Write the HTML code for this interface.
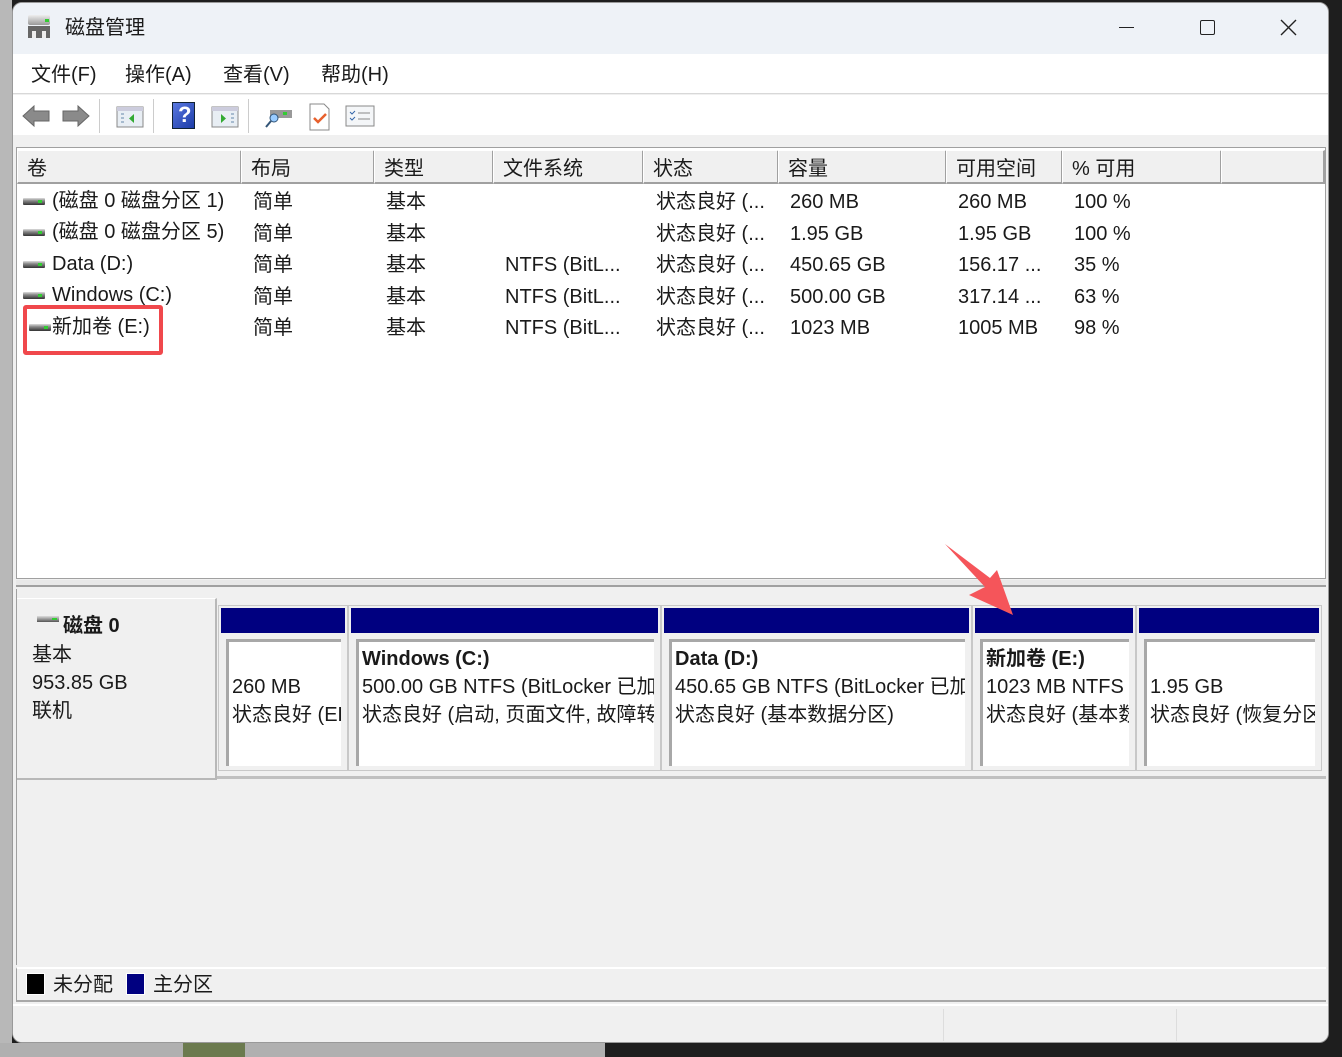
<!DOCTYPE html>
<html><head><meta charset="utf-8"><style>
*{margin:0;padding:0;box-sizing:border-box}
body{width:1342px;height:1057px;position:relative;overflow:hidden;background:#1e1e1e;font-family:"Liberation Sans","Noto Sans CJK SC",sans-serif;font-size:20px;color:#1a1a1a}
.a{position:absolute}
.t{position:absolute;white-space:nowrap;line-height:24px}
.hd{position:absolute;top:150px;height:34px;background:#f0f0f0;border-right:2px solid #a0a0a0;border-bottom:2px solid #a0a0a0;border-left:1px solid #fff;border-top:1px solid #fff;padding:1px 0 0 9px;white-space:nowrap}
.dr{position:absolute;width:22px;height:7px;background:linear-gradient(#ddd,#888 40%,#333);border-radius:1px}
.dr::after{content:"";position:absolute;right:3px;top:2px;width:4px;height:3px;background:#3c3}
.col{position:absolute;top:605px;height:166px;background:#f0f0f0;border:1px solid #c8c8c8}
.bar{position:absolute;left:2px;right:2px;top:2px;height:25px;background:#000080}
.box{position:absolute;left:7px;right:6px;top:33px;bottom:4px;background:#fff;border-left:3px solid #a8a8a8;border-top:3px solid #a8a8a8;padding:3px 0 0 3px;overflow:hidden;white-space:nowrap;line-height:28px}
.ic{position:absolute;top:103px}
</style></head><body>
<div class="a" style="left:0;top:0;width:12px;height:1057px;background:#b8b8b8"></div>
<div class="a" style="left:0;top:1043px;width:605px;height:14px;background:#b0b0b0"></div>
<div class="a" style="left:183px;top:1043px;width:62px;height:14px;background:#6b7a4e"></div>
<div class="a" style="left:12px;top:2px;width:1317px;height:1041px;background:#f0f0f0;border-radius:10px;overflow:hidden;border:1px solid #999"></div>
<div class="a" style="left:13px;top:3px;width:1315px;height:51px;background:#eef2f7;border-radius:9px 9px 0 0"></div>
<div class="a" style="left:28px;top:15px;width:22px;height:10px;background:linear-gradient(#eee,#999);border-radius:2px"></div>
<div class="a" style="left:45px;top:19px;width:4px;height:3px;background:#3c3"></div>
<div class="a" style="left:28px;top:26px;width:22px;height:12px;background:#666"></div>
<div class="a" style="left:32px;top:31px;width:4px;height:7px;background:#eee"></div>
<div class="a" style="left:42px;top:31px;width:4px;height:7px;background:#eee"></div>
<div class="t" style="left:65px;top:16px">磁盘管理</div>
<div class="a" style="left:1119px;top:27px;width:15px;height:1px;background:#222"></div>
<div class="a" style="left:1200px;top:20px;width:15px;height:15px;border:1.5px solid #222;border-radius:2px"></div>
<svg class="a" style="left:1280px;top:19px" width="17" height="17"><path d="M1 1L16 16M16 1L1 16" stroke="#222" stroke-width="1.4"/></svg>
<div class="a" style="left:13px;top:54px;width:1315px;height:40px;background:#fff;border-bottom:1px solid #d8d8d8"></div>
<div class="t" style="left:31px;top:63px">文件(F)</div>
<div class="t" style="left:125px;top:63px">操作(A)</div>
<div class="t" style="left:223px;top:63px">查看(V)</div>
<div class="t" style="left:321px;top:63px">帮助(H)</div>
<div class="a" style="left:13px;top:95px;width:1315px;height:40px;background:#fff"></div>
<svg class="a" style="left:21px;top:103px" width="70" height="26"><path d="M2 13L13 3V8H28V18H13V23Z" fill="#8a8a8a" stroke="#666"/><path d="M68 13L57 3V8H42V18H57V23Z" fill="#8a8a8a" stroke="#666"/></svg>
<div class="a" style="left:99px;top:99px;width:1px;height:34px;background:#ccc"></div>
<svg class="ic" style="left:116px" width="28" height="26"><rect x="1" y="4" width="26" height="20" fill="#e8eef4" stroke="#888"/><rect x="1" y="4" width="26" height="4" fill="#ccd"/><path d="M18 11v9l-5-4.5z" fill="#3a3"/><path d="M5 11h3M5 15h3M5 19h3" stroke="#68a"/></svg>
<div class="a" style="left:153px;top:99px;width:1px;height:34px;background:#ccc"></div>
<div class="a" style="left:172px;top:102px;width:23px;height:27px;background:linear-gradient(135deg,#5a78e0,#1c3ca8);border:1px solid #123"><span style="position:absolute;left:5px;top:-1px;color:#fff;font-size:22px;font-weight:bold">?</span></div>
<svg class="ic" style="left:211px" width="28" height="26"><rect x="1" y="4" width="26" height="20" fill="#e8eef4" stroke="#888"/><rect x="1" y="4" width="26" height="4" fill="#ccd"/><path d="M10 11v9l5-4.5z" fill="#3a3"/><path d="M20 11h3M20 15h3M20 19h3" stroke="#68a"/></svg>
<div class="a" style="left:248px;top:99px;width:1px;height:34px;background:#ccc"></div>
<svg class="ic" style="left:264px" width="30" height="26"><rect x="6" y="7" width="22" height="8" fill="#999"/><rect x="19" y="9" width="4" height="3" fill="#3c3"/><circle cx="10" cy="15" r="4" fill="#9cf" stroke="#357"/><path d="M7 18L2 24" stroke="#357" stroke-width="2"/></svg>
<svg class="ic" style="left:308px" width="24" height="28"><path d="M2 1H16L21 6V27H2Z" fill="#fff" stroke="#888"/><path d="M6 15l4 4 8-8" stroke="#e8602c" stroke-width="2.5" fill="none"/></svg>
<svg class="ic" style="left:345px" width="30" height="26"><rect x="1" y="3" width="28" height="20" fill="#f4f6f8" stroke="#888"/><path d="M5 9l2 2 3-3M5 15l2 2 3-3" stroke="#36a" fill="none"/><path d="M13 10h12M13 16h12" stroke="#888"/></svg>
<div class="a" style="left:16px;top:147px;width:1310px;height:432px;background:#fff;border:1px solid #a0a0a0"></div>
<div class="hd" style="left:17px;width:225px">卷</div>
<div class="hd" style="left:241px;width:134px">布局</div>
<div class="hd" style="left:374px;width:120px">类型</div>
<div class="hd" style="left:493px;width:151px">文件系统</div>
<div class="hd" style="left:643px;width:136px">状态</div>
<div class="hd" style="left:778px;width:169px">容量</div>
<div class="hd" style="left:946px;width:117px">可用空间</div>
<div class="hd" style="left:1062px;width:160px">% 可用</div>
<div class="hd" style="left:1221px;width:104px"></div>

<div class="dr" style="left:23px;top:198px"></div>
<div class="dr" style="left:23px;top:229px"></div>
<div class="dr" style="left:23px;top:261px"></div>
<div class="dr" style="left:23px;top:292px"></div>
<div class="dr" style="left:29px;top:324px"></div>

<div class="t" style="left:52px;top:189px">(磁盘 0 磁盘分区 1)</div>
<div class="t" style="left:52px;top:220px">(磁盘 0 磁盘分区 5)</div>
<div class="t" style="left:52px;top:252px">Data (D:)</div>
<div class="t" style="left:52px;top:283px">Windows (C:)</div>
<div class="t" style="left:52px;top:315px">新加卷 (E:)</div>
<div class="a" style="left:23px;top:305px;width:140px;height:50px;border:4px solid #f0484c;border-radius:3px"></div>

<div class="t" style="left:253px;top:187px;line-height:31.5px">简单<br>简单<br>简单<br>简单<br>简单</div>
<div class="t" style="left:386px;top:187px;line-height:31.5px">基本<br>基本<br>基本<br>基本<br>基本</div>
<div class="t" style="left:505px;top:187px;line-height:31.5px"><br><br>NTFS (BitL...<br>NTFS (BitL...<br>NTFS (BitL...</div>
<div class="t" style="left:656px;top:187px;line-height:31.5px">状态良好 (...<br>状态良好 (...<br>状态良好 (...<br>状态良好 (...<br>状态良好 (...</div>
<div class="t" style="left:790px;top:187px;line-height:31.5px">260 MB<br>1.95 GB<br>450.65 GB<br>500.00 GB<br>1023 MB</div>
<div class="t" style="left:958px;top:187px;line-height:31.5px">260 MB<br>1.95 GB<br>156.17 ...<br>317.14 ...<br>1005 MB</div>
<div class="t" style="left:1074px;top:187px;line-height:31.5px">100 %<br>100 %<br>35 %<br>63 %<br>98 %</div>

<div class="a" style="left:16px;top:580px;width:1310px;height:7px;background:#e8e8e8;border-bottom:2px solid #a0a0a0"></div>
<div class="a" style="left:16px;top:589px;width:1310px;height:376px;background:#f0f0f0;border-left:1px solid #a0a0a0"></div>
<div class="a" style="left:17px;top:598px;width:200px;height:182px;background:#f0f0f0;border-right:2px solid #b8b8b8;border-bottom:2px solid #b8b8b8;border-top:1px solid #fff"></div>
<div class="a" style="left:37px;top:616px;width:22px;height:6px;background:linear-gradient(#ddd,#555)"></div>
<div class="a" style="left:52px;top:618px;width:5px;height:2px;background:#3c3"></div>
<div class="t" style="left:63px;top:614px;font-weight:bold">磁盘 0</div>
<div class="t" style="left:32px;top:641px;line-height:28px">基本<br>953.85 GB<br>联机</div>
<div class="a" style="left:217px;top:776px;width:1109px;height:3px;background:#c0c0c0"></div>

<div class="col" style="left:218px;width:130px"><div class="bar"></div><div class="box"><br>260 MB<br>状态良好 (EFI</div></div>
<div class="col" style="left:348px;width:313px"><div class="bar"></div><div class="box"><b>Windows (C:)</b><br>500.00 GB NTFS (BitLocker 已加密)<br>状态良好 (启动, 页面文件, 故障转储)</div></div>
<div class="col" style="left:661px;width:311px"><div class="bar"></div><div class="box"><b>Data (D:)</b><br>450.65 GB NTFS (BitLocker 已加密)<br>状态良好 (基本数据分区)</div></div>
<div class="col" style="left:972px;width:164px"><div class="bar"></div><div class="box"><b>新加卷 (E:)</b><br>1023 MB NTFS<br>状态良好 (基本数据</div></div>
<div class="col" style="left:1136px;width:186px"><div class="bar"></div><div class="box"><br>1.95 GB<br>状态良好 (恢复分区)</div></div>

<svg class="a" style="left:0;top:0" width="1342" height="1057"><path d="M945 544L990 578L997 570L1013 615L969 595L985 587Z" fill="#f5555a"/></svg>

<div class="a" style="left:16px;top:967px;width:1310px;height:35px;background:#f0f0f0;border-top:2px solid #fff;border-bottom:2px solid #a8a8a8;border-left:1px solid #a0a0a0"></div>
<div class="a" style="left:26px;top:973px;width:19px;height:22px;background:#000;border:1px solid #fff"></div>
<div class="t" style="left:53px;top:973px">未分配</div>
<div class="a" style="left:126px;top:973px;width:19px;height:22px;background:#000080;border:1px solid #fff"></div>
<div class="t" style="left:153px;top:973px">主分区</div>
<div class="a" style="left:13px;top:1004px;width:1315px;height:38px;background:#f0f0f0;border-top:2px solid #fff;border-radius:0 0 9px 9px"></div>
<div class="a" style="left:943px;top:1009px;width:1px;height:32px;background:#ddd"></div>
<div class="a" style="left:1176px;top:1009px;width:1px;height:32px;background:#ddd"></div>
</body></html>
